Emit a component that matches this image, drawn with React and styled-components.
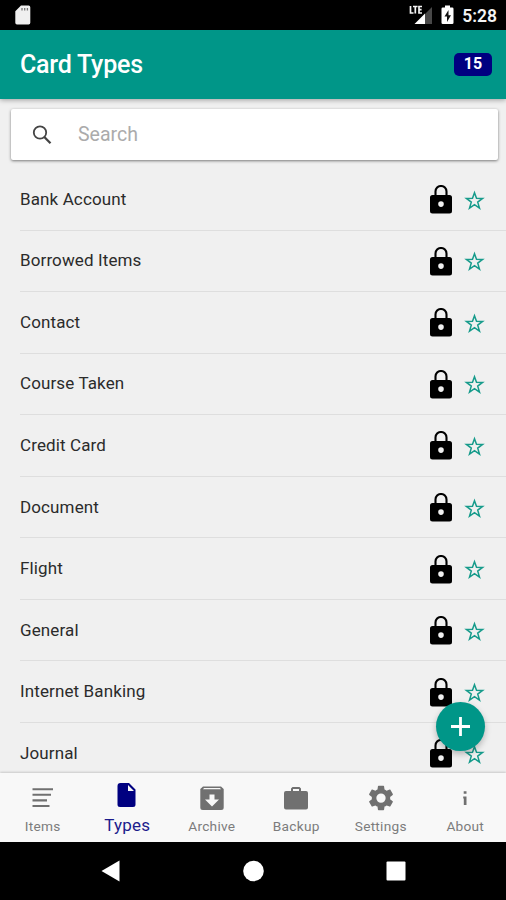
import React from "react";
import styled, { createGlobalStyle } from "styled-components";

const GlobalStyle = createGlobalStyle`
  * { box-sizing: border-box; }
  body { margin: 0; background: #000; }
  svg { display: block; flex: none; }
`;

const Screen = styled.div`
  position: relative;
  display: flex;
  flex-direction: column;
  width: 506px;
  height: 900px;
  overflow: hidden;
  background: #f0f0f0;
  font-family: Roboto, sans-serif;
`;

const StatusBar = styled.div`
  display: flex;
  align-items: center;
  flex: none;
  height: 30px;
  padding: 0 9px 0 15px;
  background: #000;
`;

const StatusIcons = styled.div`
  display: flex;
  align-items: center;
  margin-left: auto;
`;

const BatterySlot = styled.span`
  margin: 0 8px;
`;

const Clock = styled.span`
  padding-top: 2px;
  color: #f4f4f4;
  font-size: 17.5px;
  line-height: 20px;
  font-weight: 600;
`;

const Header = styled.header`
  position: relative;
  display: flex;
  align-items: center;
  justify-content: space-between;
  flex: none;
  height: 69px;
  padding: 0 14px 0 20px;
  background: #009688;
  box-shadow: 0 1px 5px rgba(0, 0, 0, 0.35);
`;

const Title = styled.h1`
  margin: 0;
  color: #fff;
  font-size: 25px;
  font-weight: 500;
  letter-spacing: -0.22px;
`;

const Badge = styled.span`
  width: 38px;
  height: 23px;
  border-radius: 5px;
  background: #000080;
  color: #fff;
  font-size: 16px;
  line-height: 22px;
  font-weight: 700;
  text-align: center;
`;

const SearchBox = styled.label`
  display: flex;
  align-items: center;
  flex: none;
  height: 51px;
  margin: 10px 8px 8px 11px;
  padding-left: 21px;
  border-radius: 2px;
  background: #fff;
  box-shadow: 0 1px 3px rgba(0, 0, 0, 0.5);
`;

const SearchInput = styled.input`
  flex: 1;
  min-width: 0;
  margin-left: 26px;
  padding: 0;
  border: 0;
  outline: 0;
  background: transparent;
  color: #222;
  font: 400 19.5px Roboto, sans-serif;
  &::placeholder { color: #ababab; opacity: 1; }
`;

const List = styled.ul`
  flex: 1;
  min-height: 0;
  margin: 0;
  padding: 1px 0 0 20px;
  overflow: hidden;
  list-style: none;
`;

const Row = styled.li`
  display: flex;
  align-items: center;
  height: 61.55px;
  padding-right: 21px;
  border-bottom: 1px solid #dedede;
`;

const RowLabel = styled.span`
  flex: 1;
  padding-bottom: 1px;
  color: #2b2b2b;
  font-size: 17px;
  line-height: 20px;
  letter-spacing: 0.12px;
`;

const RowIcons = styled.div`
  display: flex;
  align-items: center;
  gap: 12px;
  padding-top: 1px;
`;

const AddButton = styled.button`
  position: absolute;
  left: 436px;
  top: 702px;
  display: grid;
  place-items: center;
  width: 49px;
  height: 49px;
  padding: 0;
  border: 0;
  border-radius: 50%;
  background: #009688;
  box-shadow: 0 3px 6px rgba(0, 0, 0, 0.25);
`;

const Tabs = styled.nav`
  display: grid;
  grid-template-columns: repeat(6, 84.5px);
  flex: none;
  height: 69px;
  background: #f8f8f8;
  box-shadow: 0 -1px 2px rgba(0, 0, 0, 0.16);
  z-index: 0;
`;

const Tab = styled.a`
  display: flex;
  flex-direction: column;
  align-items: center;
  padding: ${(p) => (p.$active ? 9 : 12)}px 0 0 1px;
  color: ${(p) => (p.$active ? "#000080" : "#707070")};
`;

const TabLabel = styled.span`
  margin-top: ${(p) => (p.$active ? 6 : 6)}px;
  color: ${(p) => (p.$active ? "#1c1c8c" : "#7c7c7c")};
  font-size: ${(p) => (p.$active ? 17 : 13.7)}px;
  line-height: ${(p) => (p.$active ? 22 : 18)}px;
  letter-spacing: 0.25px;
`;

const NavBar = styled.div`
  display: flex;
  align-items: center;
  flex: none;
  gap: 122px;
  height: 58px;
  padding-left: 101px;
  background: #000;
`;

const SdCard = () => (
  <svg width="16" height="20" viewBox="0 0 16 20">
    <path d="M6 .5h7.6A1.7 1.7 0 0 1 15.3 2.200v15.600a1.700 1.700 0 0 1-1.700 1.700H2A1.700 1.700 0 0 1 .3 17.800V6.200z" fill="#f0f0f0" />
    <path d="M7 3v2.400M9.700 3v2.400M12.400 3v2.400" stroke="#777" strokeWidth="1.300" />
  </svg>
);

const Signal = () => (
  <svg width="24" height="20" viewBox="0 0 24 20">
    <path d="M23 2v17h-7V9z" fill="#484848" />
    <path d="M16 8.500V19H5.500z" fill="#fff" />
    <path d="M1.500 1v7h3M4 1.500h4.600M6.300 1.500V8.500M13 1.500H10v6.500h3M10 4.700h2.600" fill="none" stroke="#f4f4f4" strokeWidth="1.700" />
  </svg>
);

const Battery = () => (
  <svg width="13" height="20" viewBox="0 0 13 20">
    <path d="M4 .5h5v2h2.200q1.300 0 1.300 1.300v14q0 1.300-1.300 1.300H1.800Q.5 19.100.5 17.800v-14q0-1.300 1.300-1.300H4z" fill="#fff" />
    <path d="M7.500 5L3.500 11.500H6V17l4-6.800H7.500z" fill="#111" />
  </svg>
);

const SearchIcon = () => (
  <svg width="20" height="20" viewBox="0 0 20 20" fill="none" stroke="#444" strokeWidth="1.800">
    <circle cx="8" cy="7.500" r="6.200" />
    <path d="M12.300 12l6.200 6.200" strokeWidth="2.300" />
  </svg>
);

const Lock = () => (
  <svg width="22" height="29" viewBox="0 0 22 29">
    <path d="M5.500 11V6.500a5.500 5.500 0 0 1 11 0V11" fill="none" stroke="#000" strokeWidth="2.100" />
    <path fillRule="evenodd" d="M2.500 10h17A2.500 2.500 0 0 1 22 12.500v13.500a2.500 2.500 0 0 1-2.500 2.500h-17A2.500 2.500 0 0 1 0 26V12.500A2.500 2.500 0 0 1 2.500 10zM11 16.300a2.800 2.800 0 1 0 0 5.600 2.800 2.800 0 0 0 0-5.600z" />
  </svg>
);

const Star = () => (
  <svg width="21" height="20" viewBox="0 0 21 20">
    <path d="M10.500 2.300l2 5.500 6.100.1-4.900 3.700 1.800 6-5-3.500-5 3.500 1.800-6-4.900-3.700 6.100-.1z" transform="translate(0 .5)" fill="none" stroke="#169b8b" strokeWidth="1.500" />
  </svg>
);

const Plus = () => (
  <svg width="20" height="20" viewBox="0 0 20 20">
    <path d="M9.500 0v19M0 9.500h19" stroke="#fff" strokeWidth="2.800" />
  </svg>
);

const tabDrawings = {
  Items: <path d="M2.500 4.200h20.500M2.500 9.800h18.500M2.500 15.400h14.500M2.500 21h17" stroke="currentColor" strokeWidth="2.100" />,
  Types: <path fillRule="evenodd" d="M6.500 1h8.500l6.500 6.500v15q0 2.500-2.500 2.500H6q-2.500 0-2.500-2.500v-18.500Q3.500 1 6.500 1zM14 3v6h6z" fill="currentColor" />,
  Archive: <path fillRule="evenodd" d="M4 1.500h18L24.700 4v18.500q0 2.500-2.500 2.500H3.800q-2.500 0-2.500-2.500V4zM5 3L4 4.300h18L21 3zM10.500 9.500v5H6l7 7 7-7h-4.500v-5z" fill="currentColor" />,
  Backup: <path fillRule="evenodd" d="M8 6V3.500L9.500 2h7L18 3.500V6h5q2 0 2 2v14.500q0 2-2 2H3q-2 0-2-2V8q0-2 2-2zM10 6h6V4h-6z" fill="currentColor" />,
  Settings: (
    <g transform="translate(-1.700 -1.600) scale(1.225)">
      <path d="M19.430 12.980c.04-.32.07-.64.07-.98s-.03-.66-.07-.98l2.110-1.650c.19-.15.240-.42.120-.64l-2-3.460c-.12-.22-.39-.3-.61-.22l-2.490 1c-.52-.4-1.080-.73-1.690-.98l-.38-2.650A.488.488 0 0 0 14 2h-4c-.25 0-.46.18-.49.420l-.38 2.650c-.61.250-1.170.590-1.690.980l-2.490-1c-.23-.09-.49 0-.61.220l-2 3.460c-.13.220-.07.490.120.640l2.110 1.650c-.04.320-.07.650-.07.980s.03.660.07.980l-2.110 1.650c-.19.150-.24.420-.12.640l2 3.460c.12.220.39.300.61.220l2.490-1c.52.400 1.080.730 1.690.980l.38 2.650c.03.240.24.420.49.420h4c.25 0 .46-.18.490-.42l.38-2.650c.61-.25 1.170-.59 1.690-.98l2.490 1c.23.090.49 0 .61-.22l2-3.460c.12-.22.070-.49-.12-.64zM12 15.800A3.800 3.800 0 1 1 12 8.200a3.800 3.800 0 0 1 0 7.600z" fill="currentColor" />
    </g>
  ),
  About: <path d="M11.700 6.200h2.800v2.600h-2.800zM11.200 11.500h3.300V20h-2.700v-6.500h-.6z" fill="currentColor" />,
};

const TabIcon = ({ name }) => (
  <svg width="26" height="26" viewBox="0 0 26 26">{tabDrawings[name]}</svg>
);

const cardTypes = ["Bank Account", "Borrowed Items", "Contact", "Course Taken", "Credit Card", "Document", "Flight", "General", "Internet Banking", "Journal"];

export default function App() {
  return (
    <>
      <GlobalStyle />
      <Screen>
        <StatusBar>
          <SdCard />
          <StatusIcons>
            <Signal />
            <BatterySlot>
              <Battery />
            </BatterySlot>
            <Clock>5:28</Clock>
          </StatusIcons>
        </StatusBar>
        <Header>
          <Title>Card Types</Title>
          <Badge>15</Badge>
        </Header>
        <SearchBox>
          <SearchIcon />
          <SearchInput placeholder="Search" />
        </SearchBox>
        <List>
          {cardTypes.map((name) => (
            <Row key={name}>
              <RowLabel>{name}</RowLabel>
              <RowIcons>
                <Lock />
                <Star />
              </RowIcons>
            </Row>
          ))}
        </List>
        <Tabs>
          {Object.keys(tabDrawings).map((name) => (
            <Tab key={name} $active={name === "Types"}>
              <TabIcon name={name} />
              <TabLabel $active={name === "Types"}>{name}</TabLabel>
            </Tab>
          ))}
        </Tabs>
        <NavBar>
          <svg width="20" height="22" viewBox="0 0 20 22"><path d="M.5 11L18.500 .5v21z" fill="#fff" /></svg>
          <svg width="21" height="22" viewBox="0 0 21 22"><circle cx="10.500" cy="11" r="10.300" fill="#fff" /></svg>
          <svg width="20" height="20" viewBox="0 0 20 20"><rect x=".5" y=".5" width="19" height="19" rx="1" fill="#fff" /></svg>
        </NavBar>
        <AddButton aria-label="Add">
          <Plus />
        </AddButton>
      </Screen>
    </>
  );
}
